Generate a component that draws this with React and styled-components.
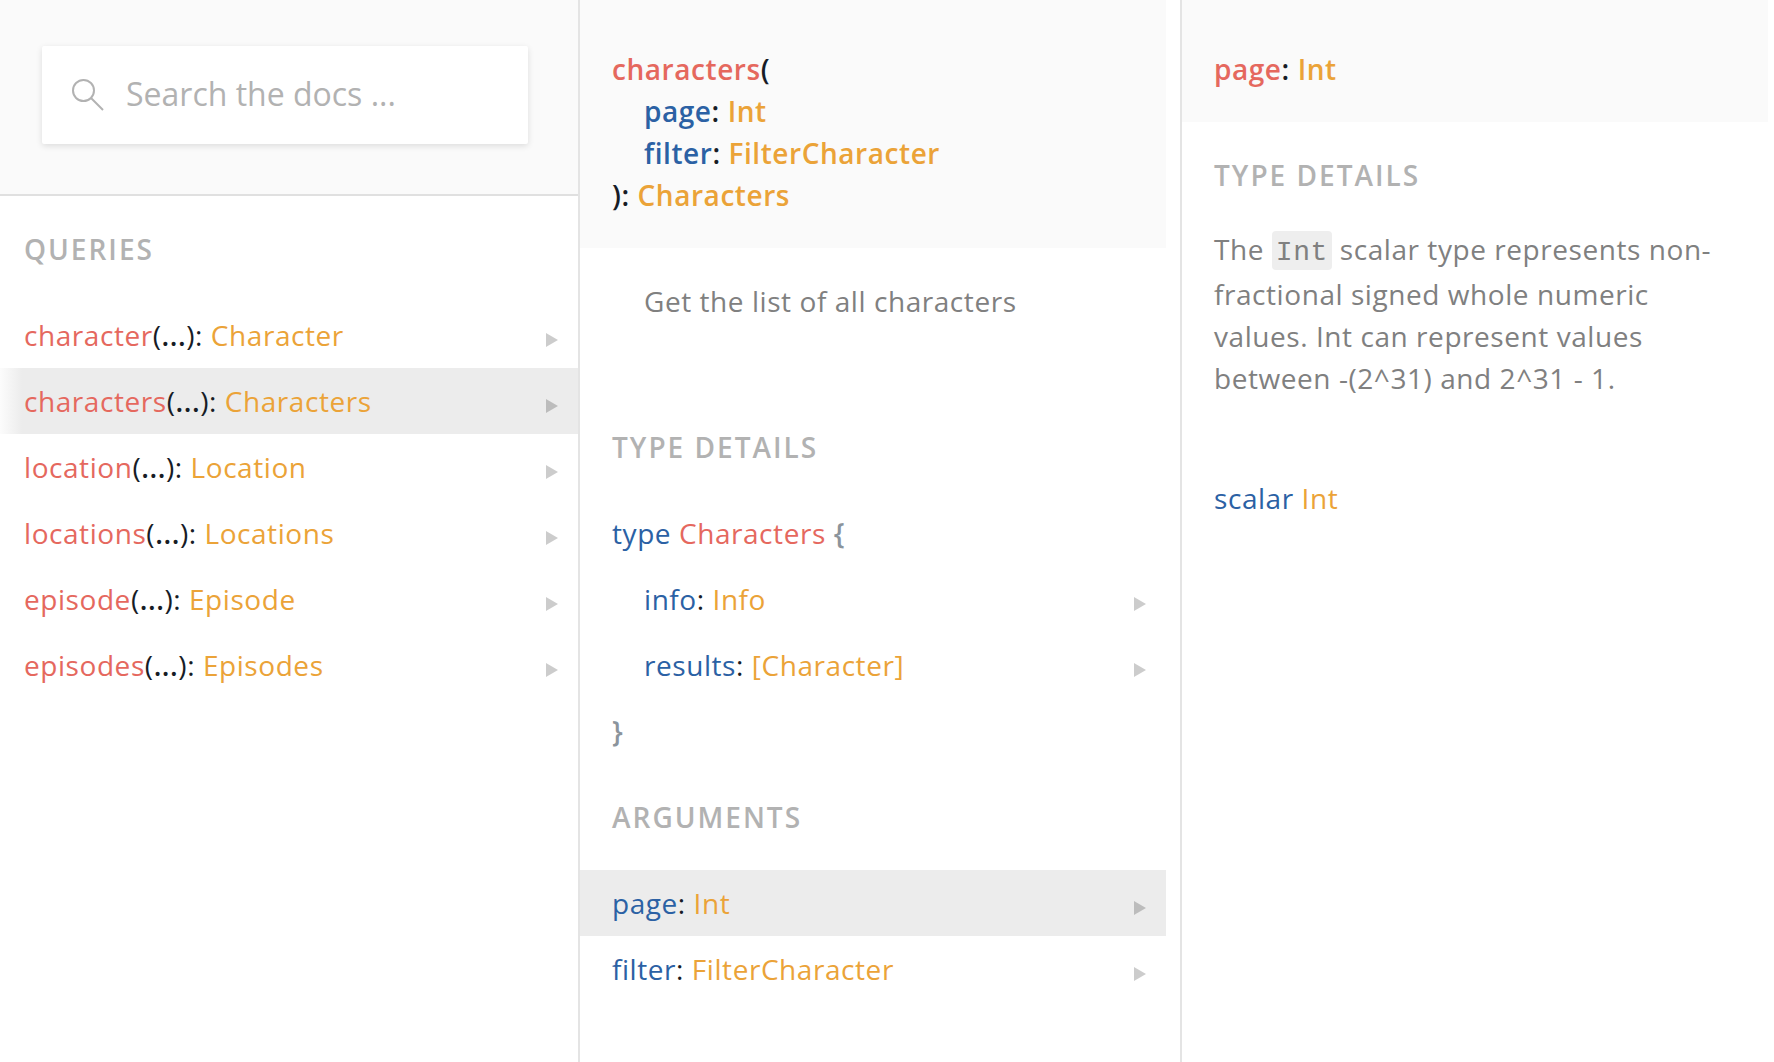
import React from 'react';
import styled, { createGlobalStyle, css } from 'styled-components';

const GlobalStyle = createGlobalStyle`
  *, *::before, *::after { box-sizing: border-box; }
  html, body, #root { height: 100%; }
  body { margin: 0; background: #fff; }
`;

const tones = {
  field: '#e5685e',
  arg: '#2b61a4',
  type: '#eba338',
  punct: '#171c26',
  brace: '#8b949c',
};

const Explorer = styled.div`
  display: grid;
  grid-template-columns: 580fr 602fr 592fr;
  min-height: 100%;
  font-family: 'Open Sans', 'Liberation Sans', sans-serif;
  font-size: 28px;
  line-height: 42px;
  letter-spacing: 0.02em;
  color: ${tones.punct};
`;

const Column = styled.section`
  min-width: 0;
  padding-right: ${(p) => p.$gutter || 0}px;
  border-right: ${(p) => (p.$last ? 'none' : '2px solid #e4e4e4')};
`;

const SearchPanel = styled.div`
  padding: 46px 50px 50px 42px;
  background: #fafafa;
  border-bottom: 2px solid #e0e0e0;
`;

const SearchBox = styled.label`
  display: flex;
  align-items: center;
  gap: 22px;
  height: 98px;
  padding: 0 30px;
  background: #fff;
  border-radius: 2px;
  box-shadow: 0 2px 6px rgba(0, 0, 0, 0.12);
`;

const SearchInput = styled.input`
  flex: 1;
  min-width: 0;
  padding: 0 0 2px;
  border: 0;
  outline: 0;
  background: transparent;
  font: inherit;
  font-size: 32px;
  color: #666;
  &::placeholder { color: #b2b2b2; opacity: 1; }
`;

const Title = styled.h2`
  margin: 0;
  padding: 32px ${(p) => p.$inset}px;
  font-size: 28px;
  font-weight: 600;
  letter-spacing: 2px;
  text-transform: uppercase;
  color: #b2b2b2;
`;

const Signature = styled.header`
  padding: 48px 32px 32px;
  background: #fafafa;
  font-weight: 600;
`;

const SignatureLine = styled.div`
  padding-left: ${(p) => (p.$indent ? 32 : 0)}px;
`;

const Description = styled.p`
  margin: 0;
  padding: ${(p) => (p.$flush ? '0 32px 66px' : '32px 64px 72px')};
  color: #808080;
`;

const InlineCode = styled.code`
  padding: 6px 4px 2px;
  border-radius: 4px;
  background: #eee;
  font-family: 'Liberation Mono', monospace;
  font-size: 28px;
  line-height: 40px;
`;

const List = styled.ul`
  margin: 0;
  padding: 0;
  list-style: none;
`;

const rowBox = css`
  width: 100%;
  padding: 12px 20px 12px ${(p) => p.$inset}px;
`;

const Line = styled.div`
  ${rowBox}
`;

const RowButton = styled.button`
  ${rowBox}
  display: flex;
  align-items: center;
  justify-content: space-between;
  border: 0;
  font: inherit;
  letter-spacing: inherit;
  color: inherit;
  text-align: left;
  cursor: pointer;
  background: ${(p) =>
    p.$active
      ? p.$fade
        ? 'linear-gradient(to right, #fcfcfc 0, #ececec 22px)'
        : '#ececec'
      : 'transparent'};
`;

const Arrow = styled.span`
  flex: none;
  margin-top: 10px;
  border-left: 12px solid rgba(0, 0, 0, 0.2);
  border-top: 7px solid transparent;
  border-bottom: 7px solid transparent;
`;

const Token = styled.span`
  color: ${(p) => tones[p.$tone]};
  font-weight: ${(p) => (p.$strong ? 600 : 'inherit')};
`;

function SearchIcon() {
  return (
    <svg width="32" height="32" viewBox="0 0 32 32" fill="none" stroke="#b2b2b2" strokeWidth="2" aria-hidden="true">
      <circle cx="11.5" cy="11.5" r="10.5" />
      <path d="M19 19L31 31" />
    </svg>
  );
}

function Row({ inset, active, fade, children }) {
  return (
    <li>
      <RowButton type="button" $inset={inset} $active={active} $fade={fade}>
        <span>{children}</span>
        <Arrow aria-hidden="true" />
      </RowButton>
    </li>
  );
}

function Pair({ name, type, tone = 'arg' }) {
  return (
    <>
      <Token $tone={tone}>{name}</Token>: <Token $tone="type">{type}</Token>
    </>
  );
}

const queries = [
  ['character', 'Character'],
  ['characters', 'Characters'],
  ['location', 'Location'],
  ['locations', 'Locations'],
  ['episode', 'Episode'],
  ['episodes', 'Episodes'],
];

export default function App() {
  return (
    <>
      <GlobalStyle />
      <Explorer>
        <Column>
          <SearchPanel>
            <SearchBox>
              <SearchIcon />
              <SearchInput type="text" aria-label="Search the docs" placeholder="Search the docs ..." />
            </SearchBox>
          </SearchPanel>
          <Title $inset={24}>Queries</Title>
          <List>
            {queries.map(([name, type]) => (
              <Row key={name} inset={24} active={name === 'characters'} fade>
                <Token $tone="field">{name}</Token>
                (<Token $tone="punct" $strong>...</Token>): <Token $tone="type">{type}</Token>
              </Row>
            ))}
          </List>
        </Column>

        <Column $gutter={14}>
          <Signature>
            <SignatureLine>
              <Token $tone="field">characters</Token>(
            </SignatureLine>
            <SignatureLine $indent>
              <Pair name="page" type="Int" />
            </SignatureLine>
            <SignatureLine $indent>
              <Pair name="filter" type="FilterCharacter" />
            </SignatureLine>
            <SignatureLine>
              ): <Token $tone="type">Characters</Token>
            </SignatureLine>
          </Signature>
          <Description>Get the list of all characters</Description>
          <Title $inset={32}>Type details</Title>
          <Line $inset={32}>
            <Token $tone="arg">type</Token> <Token $tone="field">Characters</Token>{' '}
            <Token $tone="brace" $strong>{'{'}</Token>
          </Line>
          <List>
            <Row inset={64}>
              <Pair name="info" type="Info" />
            </Row>
            <Row inset={64}>
              <Pair name="results" type="[Character]" />
            </Row>
          </List>
          <Line $inset={32}>
            <Token $tone="brace" $strong>{'}'}</Token>
          </Line>
          <Title $inset={32}>Arguments</Title>
          <List>
            <Row inset={32} active>
              <Pair name="page" type="Int" />
            </Row>
            <Row inset={32}>
              <Pair name="filter" type="FilterCharacter" />
            </Row>
          </List>
        </Column>

        <Column $last $gutter={6}>
          <Signature>
            <Pair name="page" type="Int" tone="field" />
          </Signature>
          <Title $inset={32}>Type details</Title>
          <Description $flush>
            The <InlineCode>Int</InlineCode> scalar type represents non-fractional signed whole
            numeric values. Int can represent values between -(2^31) and 2^31 - 1.
          </Description>
          <Line $inset={32}>
            <Token $tone="arg">scalar</Token> <Token $tone="type">Int</Token>
          </Line>
        </Column>
      </Explorer>
    </>
  );
}
